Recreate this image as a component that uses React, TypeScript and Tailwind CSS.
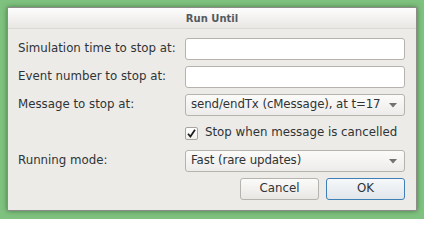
import React from "react";

const font = { fontFamily: '"DejaVu Sans", Verdana, sans-serif' };

function Arrow() {
  return (
    <svg width="8" height="5" viewBox="0 0 8 5" className="shrink-0">
      <path d="M0 0 L8 0 L4 4.5 Z" fill="#727272" />
    </svg>
  );
}

function Input() {
  return <div className="h-[22px] w-[220px] rounded-[3px] border border-[#b6b3ae] bg-white" />;
}

function Combo({ text }: { text: string }) {
  return (
    <div className="flex h-[22px] w-[220px] items-center justify-between gap-[4px] overflow-hidden rounded-[3px] border border-[#b6b3ae] bg-gradient-to-b from-[#fbfbfa] to-[#eeecea] pl-[5px] pr-[7px]">
      <span className="min-w-0 overflow-hidden whitespace-nowrap text-[11.8px] tracking-[-0.1px] text-[#2e3436]">{text}</span>
      <Arrow />
    </div>
  );
}

export default function App() {
  return (
    <div className="h-[219px] w-[424px] bg-[#7fc27f] pl-[7px] pt-[7px]" style={font}>
      <div className="flex h-[204px] w-[410px] flex-col border border-[#8e8c89] bg-[#edebe8] shadow-[0_0_5px_rgba(0,40,0,0.45)]">
        <div className="flex h-[21px] items-center justify-center border-b border-[#dcd9d5] bg-gradient-to-b from-[#fdfdfd] to-[#e9e7e4]">
          <span className="text-[10px] font-bold text-[#525a60]">Run Until</span>
        </div>
        <div className="flex flex-col gap-[6px] pl-[10px] pr-[11px] pt-[9px] text-[11.8px] text-[#2e3436]">
          <div className="flex h-[22px] items-center justify-between">
            <span>Simulation time to stop at:</span>
            <Input />
          </div>
          <div className="flex h-[22px] items-center justify-between">
            <span>Event number to stop at:</span>
            <Input />
          </div>
          <div className="flex h-[22px] items-center justify-between">
            <span>Message to stop at:</span>
            <Combo text="send/endTx (cMessage), at t=17" />
          </div>
          <div className="flex h-[22px] items-center justify-end">
            <div className="flex w-[220px] items-center gap-[7px]">
              <div className="flex h-[13px] w-[13px] items-center justify-center rounded-[2px] border border-[#a8a5a0] bg-gradient-to-b from-white to-[#f1f0ee]">
                <svg width="9" height="9" viewBox="0 0 9 9">
                  <path d="M1 4.8 L3.4 7.6 L8 0.8" fill="none" stroke="#1a1a1a" strokeWidth="1.7" />
                </svg>
              </div>
              <span>Stop when message is cancelled</span>
            </div>
          </div>
          <div className="flex h-[22px] items-center justify-between">
            <span>Running mode:</span>
            <Combo text="Fast (rare updates)" />
          </div>
          <div className="flex h-[22px] items-center justify-end gap-[7px]">
            <button className="flex h-[22px] w-[79px] items-center justify-center rounded-[3px] border border-[#b6b3ae] bg-gradient-to-b from-[#fbfbfa] to-[#e9e7e4] text-[11.8px] text-[#2e3436]">
              Cancel
            </button>
            <button className="flex h-[22px] w-[79px] items-center justify-center rounded-[3px] border border-[#3f7fb8] bg-gradient-to-b from-[#f6f8fa] to-[#e1e6eb] text-[11.8px] text-[#2e3436]">
              OK
            </button>
          </div>
        </div>
      </div>
    </div>
  );
}
